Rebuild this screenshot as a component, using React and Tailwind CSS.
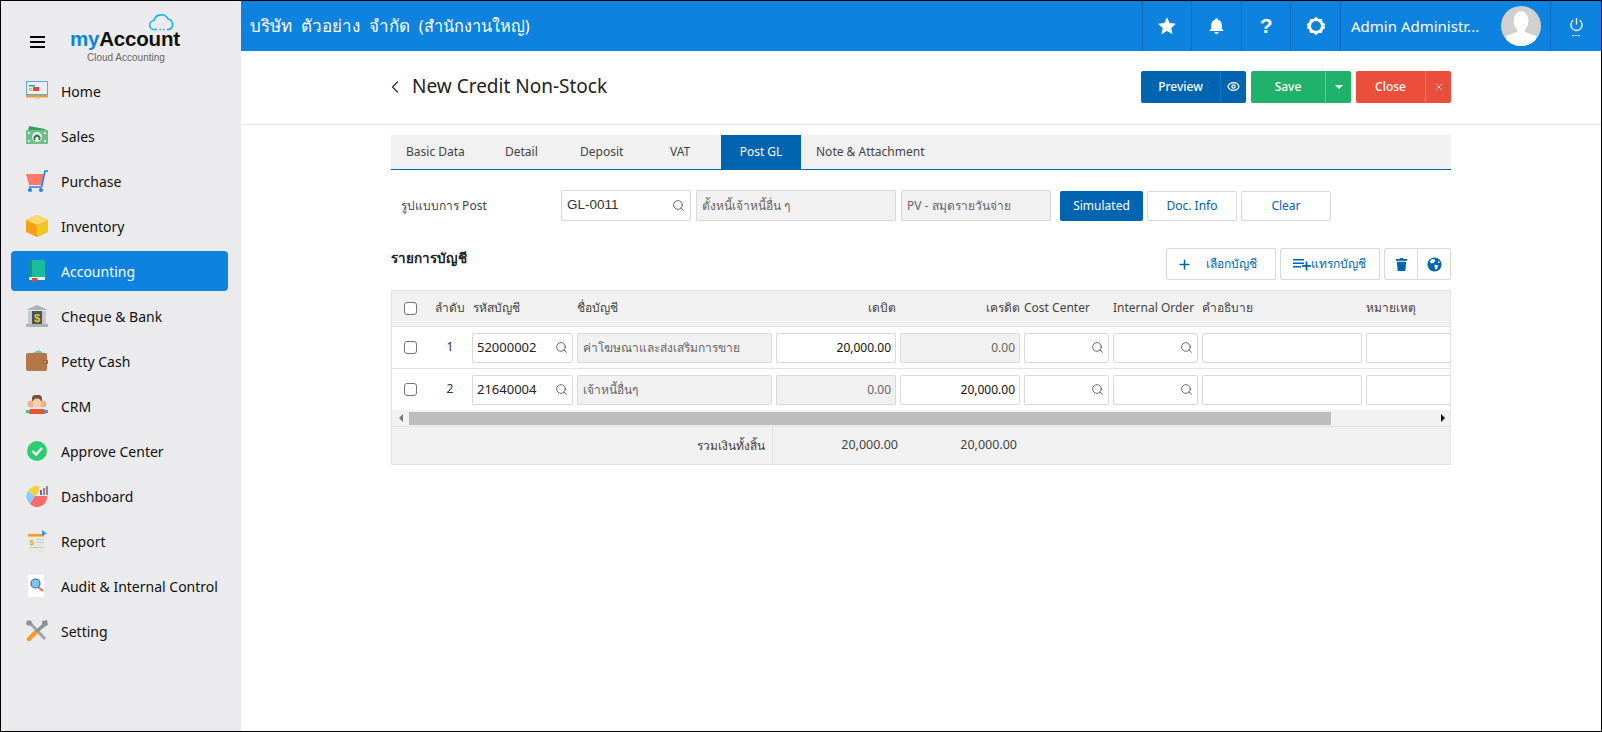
import React from "react";
import { ChevronLeft, Search, Eye, X, Plus } from "lucide-react";

const Ico = ({ children }) => (
  <svg viewBox="0 0 22 22" className="w-[22px] h-[22px] shrink-0">{children}</svg>
);

const icons = {
  Home: (
    <Ico>
      <rect x="0" y="1" width="22" height="14" fill="#5aa9e0" />
      <rect x="1" y="2" width="20" height="12" fill="#e9eff2" />
      <rect x="3" y="5" width="6" height="1.5" fill="#2aa5a0" />
      <rect x="7" y="7" width="6" height="4" fill="#e8433f" />
      <rect x="3" y="8" width="3" height="3" fill="#f2c14e" />
      <rect x="0" y="15" width="22" height="2.5" fill="#f29a2e" />
      <rect x="8" y="17.5" width="6" height="1.5" fill="#c9d3d8" />
    </Ico>
  ),
  Sales: (
    <Ico>
      <path d="M2 6 L3 1 L19 4 L20 6Z" fill="#3f9d62" />
      <rect x="0" y="5" width="22" height="14" fill="#6fbf8b" />
      <circle cx="11" cy="12" r="5" fill="#dff2e5" />
      <path d="M8 15 a3.500 3.500 0 1 1 6 0 h-1.800 a1.800 1.800 0 1 0 -2.400 0Z" fill="#3c6e52" />
      <rect x="2" y="7" width="2" height="2" fill="#dff2e5" />
      <rect x="18" y="15" width="2" height="2" fill="#dff2e5" />
      <rect x="2" y="15" width="2" height="2" fill="#dff2e5" />
      <rect x="18" y="7" width="2" height="2" fill="#dff2e5" />
    </Ico>
  ),
  Purchase: (
    <Ico>
      <path d="M0 4 H18 L16 15 H3Z" fill="#fb7a67" />
      <path d="M15.500 17 H3 M15.500 17 L19 1 H22" stroke="#2b7de9" strokeWidth="1.6" fill="none" />
      <circle cx="4" cy="20" r="2" fill="#2b7de9" />
      <circle cx="15" cy="20" r="2" fill="#2b7de9" />
    </Ico>
  ),
  Inventory: (
    <Ico>
      <path d="M11 0 L22 5 V17 L11 22 L0 17 V5Z" fill="#f5a01c" />
      <path d="M11 10 L22 5 V17 L11 22Z" fill="#f2c81f" />
      <path d="M11 0 L22 5 L11 10 L0 5Z" fill="#fbdc6a" />
    </Ico>
  ),
  Accounting: (
    <Ico>
      <rect x="3" y="0" width="16" height="19" rx="1.5" fill="#1abc9c" />
      <rect x="3" y="0" width="3" height="19" fill="#129a80" />
      <rect x="3" y="17" width="16" height="3" fill="#e8eef0" />
      <path d="M6 18 H11 V22 L8.5 20.5 L6 22Z" fill="#e8453c" />
    </Ico>
  ),
  "Cheque & Bank": (
    <Ico>
      <path d="M11 0 L22 5 H0Z" fill="#a9b4b6" />
      <rect x="0" y="19" width="22" height="3" fill="#a9b4b6" />
      <rect x="2" y="6" width="18" height="13" fill="#c3cbcd" />
      <rect x="6" y="6" width="10" height="13" fill="#4a5558" />
      <text x="11" y="16.500" textAnchor="middle" fontSize="11" fontWeight="700" fill="#f4c430" fontFamily="Liberation Sans">$</text>
    </Ico>
  ),
  "Petty Cash": (
    <Ico>
      <path d="M4 4 L13 0 L19 4Z" fill="#7fc4a5" />
      <rect x="0" y="3" width="21" height="18" rx="2" fill="#b5764a" />
      <rect x="17" y="10" width="5" height="4" rx="1" fill="#96613c" />
      <circle cx="19" cy="12" r="1" fill="#f4c430" />
    </Ico>
  ),
  CRM: (
    <Ico>
      <circle cx="5" cy="9" r="3.5" fill="#e8b48e" />
      <circle cx="17" cy="9" r="3.5" fill="#e8b48e" />
      <path d="M0 15 H5 V18 H0Z" fill="#2ecc8f" />
      <path d="M17 15 H22 V18 H17Z" fill="#2aa5f0" />
      <path d="M6 2.5 A5.5 5.5 0 0 1 16 2.5 L16 6 H6Z" fill="#7c4f3a" />
      <circle cx="11" cy="8" r="4.5" fill="#fbcfa6" />
      <path d="M3 19 L4 14 H18 L19 19Z" fill="#ef5030" />
    </Ico>
  ),
  "Approve Center": (
    <Ico>
      <circle cx="11" cy="11" r="10" fill="#2ecc71" />
      <path d="M6.5 11 L10 14.5 L16 8" stroke="#fff" strokeWidth="2.4" fill="none" />
    </Ico>
  ),
  Dashboard: (
    <Ico>
      <path d="M9 11 L2 6 A10 10 0 0 0 4 19Z" fill="#7fd3f5" />
      <path d="M9 11 L2 6 A10 10 0 0 1 13 1 L13 7Z" fill="#f9cf3c" />
      <path d="M9 11 H21 A10 10 0 0 1 4 19Z" fill="#fb6a6a" />
      <rect x="14" y="5" width="2" height="5" fill="#3d78c9" />
      <rect x="17" y="3" width="2" height="7" fill="#e76b6b" />
      <rect x="20" y="1" width="2" height="9" fill="#7b8fa8" />
    </Ico>
  ),
  Report: (
    <Ico>
      <rect x="2" y="2" width="18" height="20" fill="#e9e9e3" />
      <rect x="2" y="4" width="16" height="2.5" fill="#f29a2e" />
      <path d="M16 0 L21 3.5 L16 6Z" fill="#3d9ad9" />
      <text x="6" y="15" textAnchor="middle" fontSize="8" fontWeight="700" fill="#e8a020" fontFamily="Liberation Sans">$</text>
      <rect x="10" y="9" width="8" height="1" fill="#c9c9c3" />
      <rect x="10" y="12" width="8" height="1" fill="#c9c9c3" />
      <rect x="4" y="17" width="14" height="1" fill="#c9c9c3" />
    </Ico>
  ),
  "Audit & Internal Control": (
    <Ico>
      <rect x="2" y="0" width="16" height="22" fill="#fff" />
      <path d="M12 12 L17 16" stroke="#e8655a" strokeWidth="2" />
      <circle cx="9.5" cy="8.5" r="4.5" fill="#7cc5ec" stroke="#3b6a88" strokeWidth="1.2" />
    </Ico>
  ),
  Setting: (
    <Ico>
      <path d="M3 2 L19 19" stroke="#9aa5a8" strokeWidth="3" />
      <circle cx="3" cy="3" r="2.800" fill="#8a9497" />
      <path d="M19 4 L9 13" stroke="#8a9497" strokeWidth="3.500" />
      <path d="M16 1 L21 0 L22 5 L18 7 L16 5Z" fill="#8a9497" />
      <path d="M9 13 L3 19" stroke="#f29a2e" strokeWidth="4.500" strokeLinecap="round" />
    </Ico>
  ),
};

const menu = ["Home","Sales","Purchase","Inventory","Accounting","Cheque & Bank","Petty Cash","CRM","Approve Center","Dashboard","Report","Audit & Internal Control","Setting"];

function Sidebar() {
  return (
    <aside className="w-[240px] shrink-0 bg-[#ebebed] flex flex-col">
      <div className="h-[70px] flex relative shrink-0">
        <div className="w-[70px] pl-[29px] pt-[35px]">
          <div className="w-[15px] flex flex-col gap-[3px]">
            <div className="h-[2px] bg-black" />
            <div className="h-[2px] bg-black" />
            <div className="h-[2px] bg-black" />
          </div>
        </div>
        <div className="absolute left-[69px] top-[25px] text-[20.500px] leading-[26px] font-bold tracking-[-0.2px] font-['Liberation_Sans',sans-serif] text-[#111]">
          <span className="text-[#0d82df]">my</span>Account
        </div>
        <div className="absolute left-[86px] top-[50px] text-[10px] leading-[14px] text-[#666] font-['Liberation_Sans',sans-serif]">Cloud Accounting</div>
        <svg viewBox="0 0 26 18" className="absolute left-[148px] top-[12px] w-[26px] h-[18px]" fill="none" stroke="#1ab0f0" strokeWidth="1.6">
          <path d="M8 16.5 H5.5 a4.5 4.5 0 0 1 -0.5 -9 a7.5 7.5 0 0 1 14 -1.5 a5.5 5.5 0 0 1 1 10.5 H18" />
          <path d="M10.5 16.5 h1.5 M14 16.5 h1.5" />
        </svg>
      </div>
      <nav className="flex flex-col gap-[5px] pl-[10px] pr-[13px]">
        {menu.map((m) => (
          <div key={m} className={`h-[40px] rounded-[4px] flex items-center gap-[13px] pl-[15px] text-[14px] ${m === "Accounting" ? "bg-[#0d82df] text-white" : "text-[#111]"}`}>
            {icons[m]}
            <span>{m}</span>
          </div>
        ))}
      </nav>
    </aside>
  );
}

const TopCell = ({ children }) => (
  <div className="w-[49.6px] h-full border-l border-[#0b6cbc] flex items-center justify-center">{children}</div>
);

function Topbar() {
  return (
    <header className="h-[50px] bg-[#0d82df] flex items-center text-white shrink-0">
      <div className="flex-1 pl-[9px] text-[17px] [word-spacing:4.500px]">บริษัท ตัวอย่าง จำกัด <span className="text-[16.300px]">(สำนักงานใหญ่)</span></div>
      <TopCell>
        <svg viewBox="0 0 24 24" className="w-[20px] h-[20px]" fill="#fff"><path d="M12 1.5 l3.2 6.9 7.5 .9 -5.6 5.1 1.5 7.4 L12 18.1 5.4 21.8 l1.5-7.4 L1.3 9.3 l7.5-.9Z" /></svg>
      </TopCell>
      <TopCell>
        <svg viewBox="0 0 24 24" className="w-[17px] h-[18px]" fill="#fff"><path d="M12 1 a2 2 0 0 1 2 2 c4 1 5.5 4 5.500 8 v4 l2.500 4 H2 l2.500-4 v-4 c0-4 1.500-7 5.500-8 a2 2 0 0 1 2-2Z M9 20.500 h6 a3 3 0 0 1 -6 0Z" /></svg>
      </TopCell>
      <TopCell><span className="text-[21px] font-bold font-['Liberation_Sans',sans-serif]">?</span></TopCell>
      <TopCell>
        <svg viewBox="0 0 24 24" className="w-[20px] h-[20px]"><path d="M12 1 L15 3.600 L19 3.500 L20 7.500 L23.200 10 L22 12 L23.200 14.500 L20 16.500 L19 20.500 L15 20.400 L12 23 L9 20.400 L5 20.500 L4 16.500 L0.800 14.500 L2 12 L0.800 10 L4 7.500 L5 3.500 L9 3.600Z" fill="#fff" /><circle cx="12" cy="12" r="6" fill="#0d82df" /></svg>
      </TopCell>
      <div className="w-[210px] h-full border-l border-[#0b6cbc] flex items-center pl-[10px] text-[15px]">
        <span className="w-[130px] whitespace-nowrap overflow-hidden">Admin Administr...</span>
        <div className="ml-[20px] w-[40px] h-[40px] rounded-full bg-[#d0d0d0] overflow-hidden shrink-0">
          <svg viewBox="0 0 40 40" className="w-[40px] h-[40px]" fill="#fff"><ellipse cx="20" cy="15" rx="7.500" ry="10" /><path d="M16 22 h8 v4 l11 4 v10 H5 v-10 l11-4Z" /></svg>
        </div>
      </div>
      <div className="w-[51px] h-full border-l border-[#0b6cbc] flex flex-col items-center justify-center">
        <svg viewBox="0 0 16 16" className="w-[15px] h-[15px]" fill="none" stroke="#fff" strokeWidth="1.400"><path d="M8 1 v7 M4.500 3.500 a6 6 0 1 0 7 0" /></svg>
        <div className="flex gap-[1px] mt-[3px]"><i className="w-[2px] h-[1px] bg-white" /><i className="w-[2px] h-[1px] bg-white" /><i className="w-[2px] h-[1px] bg-white" /></div>
      </div>
    </header>
  );
}

const Split = ({ color, line, label, w, w2, children }) => (
  <div className={`flex h-[32px] rounded-[2px] text-white text-[12px] font-medium ${color}`}>
    <div className={`${w} flex items-center justify-center`}>{label}</div>
    <div className={`${w2} border-l ${line} flex items-center justify-center`}>{children}</div>
  </div>
);

const inputCls = "h-[30px] border border-[#d9d9d9] rounded-[2px] flex items-center px-[4px] text-[12px] whitespace-nowrap overflow-hidden";
const Lookup = ({ v, cls = "", vcls = "text-[13px]" }) => (
  <div className={`${inputCls} bg-white justify-between text-[#222] ${cls}`}>
    <span className={vcls}>{v}</span>
    <Search size={13} strokeWidth={1.6} className="text-[#555] shrink-0 ml-auto" />
  </div>
);
const Ro = ({ v, right }) => (
  <div className={`${inputCls} bg-[#f1f1f1] text-[#666] ${right ? "justify-end text-[12.500px]" : "px-[5px]"}`}>{v}</div>
);
const Num = ({ v }) => <div className={`${inputCls} bg-white text-[#111] justify-end text-[12.500px]`}>{v}</div>;
const Blank = () => <div className={`${inputCls} bg-white`} />;
const Check = () => <div className="w-[13px] h-[13px] border border-[#767676] rounded-[3px] bg-white justify-self-center" />;

const cols = "grid grid-cols-[36px_36px_101px_195px_120px_120px_85px_85px_160px_100px] gap-x-[4px] items-center w-[1100px]";

function Table() {
  return (
    <div className="mt-[10px] border border-[#e3e3e3] overflow-hidden">
      <div className={`${cols} h-[36px] bg-[#f1f1f1] text-[12px] text-[#444] border-b border-[#e3e3e3] whitespace-nowrap pb-[1px]`}>
        <Check />
        <span className="text-center">ลำดับ</span>
        <span className="pl-[1px]">รหัสบัญชี</span>
        <span>ชื่อบัญชี</span>
        <span className="text-right">เดบิต</span>
        <span className="text-right">เครดิต</span>
        <span>Cost Center</span>
        <span>Internal Order</span>
        <span>คำอธิบาย</span>
        <span>หมายเหตุ</span>
      </div>
      <div className={`${cols} h-[42px] border-b border-[#e3e3e3]`}>
        <Check />
        <span className="text-center text-[12px] text-[#333] pb-[2px]">1</span>
        <Lookup v="52000002" />
        <Ro v="ค่าโฆษณาและส่งเสริมการขาย" />
        <Num v="20,000.00" />
        <Ro v="0.00" right />
        <Lookup v="" />
        <Lookup v="" />
        <Blank />
        <Blank />
      </div>
      <div className={`${cols} h-[41px]`}>
        <Check />
        <span className="text-center text-[12px] text-[#333] pb-[2px]">2</span>
        <Lookup v="21640004" />
        <Ro v="เจ้าหนี้อื่นๆ" />
        <Ro v="0.00" right />
        <Num v="20,000.00" />
        <Lookup v="" />
        <Lookup v="" />
        <Blank />
        <Blank />
      </div>
      <div className="h-[17px] bg-[#f1f1f1] flex items-center border-b border-[#e3e3e3]">
        <div className="w-[17px] flex justify-center"><div className="border-y-[4px] border-y-transparent border-r-[4px] border-r-[#777]" /></div>
        <div className="w-[922px] h-[13px] bg-[#bdbdbd]" />
        <div className="flex-1 flex justify-end pr-[5px]"><div className="border-y-[4px] border-y-transparent border-l-[4px] border-l-[#111]" /></div>
      </div>
      <div className="h-[37px] bg-[#f1f1f1] flex items-center text-[12px] text-[#444]">
        <div className="w-[381px] h-full flex items-center justify-end pr-[7px] border-r border-[#e3e3e3]">รวมเงินทั้งสิ้น</div>
        <div className="w-[125px] text-right text-[12.500px]">20,000.00</div>
        <div className="w-[119px] text-right text-[12.500px]">20,000.00</div>
      </div>
    </div>
  );
}

export default function App() {
  return (
    <div className="w-[1602px] h-[732px] border border-black flex overflow-hidden bg-white font-['Noto_Sans','Liberation_Sans',sans-serif]">
      <Sidebar />
      <main className="flex-1 flex flex-col min-w-0">
        <Topbar />
        <div className="h-[74px] shrink-0 border-b border-[#e5e5e5] flex items-center pl-[145px] pr-[150px] pb-[2px]">
          <ChevronLeft size={20} strokeWidth={1.5} className="text-[#333] -ml-[1px]" />
          <h1 className="ml-[7px] text-[19px] text-[#222] -mt-[1px]">New Credit Non-Stock</h1>
          <div className="ml-auto flex gap-[5px]">
            <Split color="bg-[#0064b0]" line="border-[#0d78c8]" label="Preview" w="w-[79px]" w2="w-[26px]"><Eye size={13} strokeWidth={2.4} /></Split>
            <Split color="bg-[#20b26b]" line="border-[#4fd193]" label="Save" w="w-[74px]" w2="w-[26px]"><div className="border-x-[4px] border-x-transparent border-t-[4px] border-t-white" /></Split>
            <Split color="bg-[#eb4e3d]" line="border-[#f47f72]" label="Close" w="w-[69px]" w2="w-[26px]"><X size={12} strokeWidth={1.5} /></Split>
          </div>
        </div>
        <div className="px-[150px] pt-[10px]">
          <div className="h-[35px] bg-[#f1f1f1] border-b border-[#0064b0] flex items-stretch text-[12px] text-[#444]">
            <div className="w-[114px] pl-[15px] flex items-center">Basic Data</div>
            <div className="w-[75px] flex items-center">Detail</div>
            <div className="w-[90px] flex items-center">Deposit</div>
            <div className="w-[51px] flex items-center">VAT</div>
            <div className="w-[80px] bg-[#0064b0] text-white flex items-center justify-center">Post GL</div>
            <div className="pl-[15px] flex items-center">Note &amp; Attachment</div>
          </div>
          <div className="mt-[20px] flex items-center gap-[5px] h-[31px]">
            <div className="w-[165px] pl-[10px] text-[12px] text-[#444]">รูปแบบการ Post</div>
            <Lookup v="GL-0011" cls="w-[130px] !h-[31px] !px-[5px]" vcls="text-[13.500px] text-[#333] font-['Liberation_Sans',sans-serif] -mt-[1px]" />
            <div className="w-[200px]"><div className={`${inputCls} !h-[31px] bg-[#f1f1f1] text-[#666] !px-[5px]`}>ตั้งหนี้เจ้าหนี้อื่น ๆ</div></div>
            <div className="w-[150px]"><div className={`${inputCls} !h-[31px] bg-[#f1f1f1] text-[#666] !px-[5px]`}>PV - สมุดรายวันจ่าย</div></div>
            <div className="ml-[4px] w-[83px] h-[30px] bg-[#0064b0] text-white text-[12px] rounded-[2px] flex items-center justify-center">Simulated</div>
            <div className="-ml-[1px] w-[90px] h-[30px] border border-[#d9d9d9] rounded-[2px] text-[#0064b0] text-[12px] flex items-center justify-center">Doc. Info</div>
            <div className="-ml-[1px] w-[90px] h-[30px] border border-[#d9d9d9] rounded-[2px] text-[#0064b0] text-[12px] flex items-center justify-center">Clear</div>
          </div>
          <div className="mt-[27px] flex items-start h-[32px]">
            <div className="text-[13.500px] font-bold text-[#222]">รายการบัญชี</div>
            <div className="ml-auto flex gap-[4px] text-[#0064b0] text-[12px]">
              <div className="w-[110px] h-[32px] border border-[#d9d9d9] rounded-[2px] flex items-center pl-[10px] gap-[14px]"><Plus size={15} strokeWidth={2.4} />เลือกบัญชี</div>
              <div className="w-[100px] h-[32px] border border-[#d9d9d9] rounded-[2px] flex items-center pl-[12px]">
                <svg viewBox="0 0 18 14" className="w-[18px] h-[14px]" fill="#0064b0"><rect x="0" y="2" width="11" height="1.500" /><rect x="0" y="5.500" width="11" height="1.500" /><rect x="0" y="9" width="8" height="1.500" /><rect x="9" y="8" width="9" height="1.800" /><rect x="12.600" y="4.500" width="1.800" height="9" /></svg>
                แทรกบัญชี
              </div>
              <div className="flex h-[32px] border border-[#d9d9d9] rounded-[2px]">
                <div className="w-[33px] flex items-center justify-center border-r border-[#d9d9d9]">
                  <svg viewBox="0 0 12 14" className="w-[11px] h-[13px]" fill="#0064b0"><rect x="0" y="1" width="12" height="2" /><rect x="4" y="0" width="4" height="2" /><path d="M1 4 H11 L10.200 14 H1.800Z" /></svg>
                </div>
                <div className="w-[32px] flex items-center justify-center">
                  <svg viewBox="0 0 16 16" className="w-[15px] h-[15px]"><circle cx="8" cy="8" r="7.500" fill="#0064b0" /><path d="M5 2 L9 3 L7.500 6 L4.500 7 L3 5Z M8 8 L12 9 L10.500 13 L8.500 13Z M12 3.500 L14 6 L11.500 6Z" fill="#fff" /></svg>
                </div>
              </div>
            </div>
          </div>
          <Table />
        </div>
      </main>
    </div>
  );
}
